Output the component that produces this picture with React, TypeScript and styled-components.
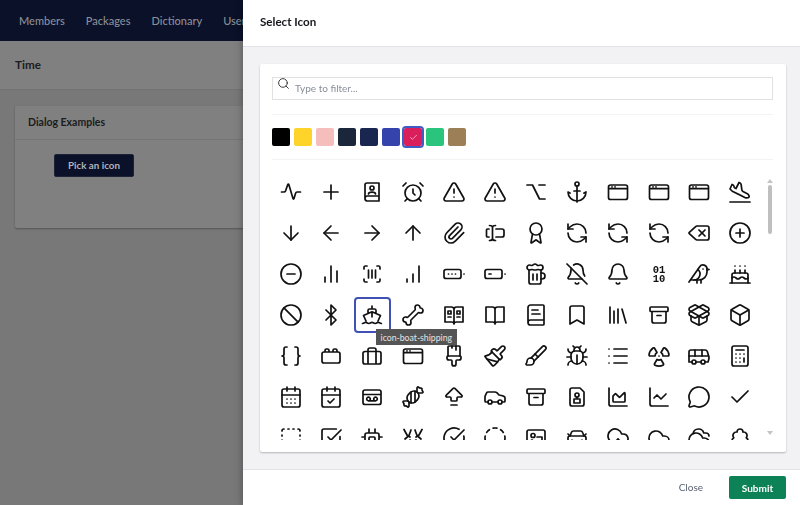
import React from 'react';
import styled, { createGlobalStyle } from 'styled-components';
import {
  AlarmClock, Anchor, ArrowBigUpDash, ArrowDown, ArrowLeft, ArrowRight, ArrowUp, Award, Ban, Beer, Bell, BellOff,
  Bird, Bluetooth, Bone, BookText, Bookmark, Box, Braces, Brush, Bug, Bus, Cake, Calculator, CalendarCheck,
  CalendarDays, Candy, Car, CarFront, ChartArea, ChartLine, Check, CircleCheckBig, CircleDashed, CircleMinus,
  CirclePlus, Cloud, CloudUpload, Cloudy, Delete, Library, List, MessageCircle, PackageOpen, Paintbrush,
  PaintbrushVertical, Paperclip, PlaneLanding, Plus, Radiation, RefreshCcw, Search, SquareCheckBig, SquareDashed,
  TreeDeciduous, TriangleAlert,
} from 'lucide-react';

const navItems = ['Members', 'Packages', 'Dictionary', 'Users'];
const swatches = ['#000000', '#ffd42a', '#f5bdbb', '#1a2639', '#19264f', '#3544ad', '#d91e5b', '#2bc47c', '#9c7f56'];

// path string helpers
const c = (x: number, y: number, r: number) => `M${x - r} ${y}a${r} ${r} 0 1 0 ${2 * r} 0a${r} ${r} 0 1 0 ${-2 * r} 0`;
const rect = (x: number, y: number, w: number, h: number, r: number) =>
  `M${x + r} ${y}h${w - 2 * r}a${r} ${r} 0 0 1 ${r} ${r}v${h - 2 * r}a${r} ${r} 0 0 1 ${-r} ${r}h${-(w - 2 * r)}a${r} ${r} 0 0 1 ${-r} ${-r}v${-(h - 2 * r)}a${r} ${r} 0 0 1 ${r} ${-r}z`;

const BinaryIcon: React.FC = () => (
  <svg width="24" height="24" viewBox="0 0 24 24">
    <BinaryText>
      <tspan x="12" y="11">01</tspan>
      <tspan x="12" y="20">10</tspan>
    </BinaryText>
  </svg>
);

const pulse = 'M2.500 12H5c.8 0 1.300-.5 1.600-1.200L8.800 4.500c.2-.6.8-.6 1 0l4.200 14c.2.7.8.7 1 0l1.600-5.300c.2-.7.7-1.200 1.400-1.200h3.500';
const addressBook = `M5 18.500V5a2 2 0 0 1 2-2h12v18H7a2.500 2.500 0 0 1-2-2.500 2.500 2.500 0 0 1 2-2.500h12${c(12, 8, 2)}M8.500 14c0-2.500 7-2.500 7 0`;
const option = 'M3 5h5.500l7 14H21M15 5h6';
const windowIcon = `${rect(2.5, 5, 19, 14.5, 2)}M2.500 8.700h19M6 6.800h.01M9 6.800h.01`;
const iBeam = 'M6.500 4.500c1.500 0 3 .8 3 2v11c0 1.200-1.500 2-3 2M12.500 4.500c-1.500 0-3 .8-3 2v11c0 1.200 1.500 2 3 2M13 8h6a2 2 0 0 1 2 2v4a2 2 0 0 1-2 2h-6M6 8H4.500a1 1 0 0 0-1 1v6a1 1 0 0 0 1 1H6';
const bars = 'M6 20v-5M12 20V4M18 20V9';
const scan = 'M7 4H5.500A1.500 1.500 0 0 0 4 5.500V7M17 4h1.500A1.500 1.500 0 0 1 20 5.500V7M20 17v1.500a1.500 1.500 0 0 1-1.500 1.500H17M7 20H5.500A1.500 1.500 0 0 1 4 18.500V17M8.500 8v8M12 8v8M15.500 8v8';
const signal = 'M6 20v-3M12 20v-8M18 20V4';
const batteryFull = `${rect(2, 7.5, 17, 9, 2)}M22 12h.01M6.500 12h.01M10 12h.01M13.500 12h.01`;
const batteryLow = `${rect(2, 7.5, 17, 9, 2)}M22 12h.01M6 12h2`;
const ship = 'M12 3v3M8 9.500V7.500A1.500 1.500 0 0 1 9.500 6h5A1.500 1.500 0 0 1 16 7.500v2M6 18l-2.500-5.500L12 8.800l8.500 3.700L18 18M12 8.800v5M2.500 20.500c1.500 0 2.200-1.200 3.200-1.200s1.600 1.200 3.100 1.200 2.200-1.200 3.200-1.200 1.600 1.200 3.100 1.200 2.200-1.200 3.200-1.200 1.600 1.200 3.100 1.200';
const bookLines = 'M12 6.500V21M12 6.500C12 5 11 4 9.500 4H3v15h6.500c1.500 0 2.500.8 2.500 2 0-1.200 1-2 2.500-2H21V4h-6.500C13 4 12 5 12 6.500ZM6 8h3v3H6zM15 8h3v3h-3zM6 14h3M15 14h3';
const bookOpen = 'M12 6.500V21M12 6.500C12 5 11 4 9.500 4H3v15h6.500c1.500 0 2.500.8 2.500 2 0-1.200 1-2 2.500-2H21V4h-6.500C13 4 12 5 12 6.500Z';
const archive = `${rect(3, 4, 18, 4.5, 1)}M5 8.500V18a2 2 0 0 0 2 2h10a2 2 0 0 0 2-2V8.500M10 12.500h4`;
const bricks = `${rect(3, 8, 18, 11, 2)}M6 8V6.500A1.500 1.500 0 0 1 7.500 5h1A1.500 1.500 0 0 1 10 6.500V8M14 8V6.500A1.500 1.500 0 0 1 15.500 5h1A1.500 1.500 0 0 1 18 6.500V8`;
const briefcase = `${rect(3, 7.5, 18, 12.5, 2)}M8 20V7.500M16 20V7.500M8 7.500V6a2 2 0 0 1 2-2h4a2 2 0 0 1 2 2v1.500`;
const cassette = `${rect(3, 5, 18, 14.5, 2)}M3 9.500h18${c(8.5, 14, 1.8)}${c(15.5, 14, 1.8)}M8.500 15.800h7`;
const sim = `M7 3h8l4 4v12a2 2 0 0 1-2 2H7a2 2 0 0 1-2-2V5a2 2 0 0 1 2-2z${c(12, 10, 2)}M9 14h6v4H9zM12 12v2`;
const chip = `${rect(5, 7, 14, 14, 2)}M9 3v4M15 3v4M2 11h3M2 16h3M19 11h3M19 16h3${rect(9, 11, 6, 6, 1)}`;
const cheers = 'M3 3.500l3 5.500 3 2M4 13l4-3.500 2-5.500M21 3.500L18 9l-3 2M20 13l-4-3.500-2-5.500M9 14l2 4M15 14l-2 4';
const imageCard = `${rect(3, 4, 18, 17, 2)}${c(9, 9.5, 2)}M3 17l5-3 4 3M13 11h5v3`;

type IconDef = React.ComponentType<any> | string;

const icons: IconDef[] = [
  pulse, Plus, addressBook, AlarmClock, TriangleAlert, TriangleAlert, option, Anchor, windowIcon, windowIcon, windowIcon, PlaneLanding,
  ArrowDown, ArrowLeft, ArrowRight, ArrowUp, Paperclip, iBeam, Award, RefreshCcw, RefreshCcw, RefreshCcw, Delete, CirclePlus,
  CircleMinus, bars, scan, signal, batteryFull, batteryLow, Beer, BellOff, Bell, BinaryIcon, Bird, Cake,
  Ban, Bluetooth, ship, Bone, bookLines, bookOpen, BookText, Bookmark, Library, archive, PackageOpen, Box,
  Braces, bricks, briefcase, windowIcon, PaintbrushVertical, Paintbrush, Brush, Bug, List, Radiation, Bus, Calculator,
  CalendarDays, CalendarCheck, cassette, Candy, ArrowBigUpDash, Car, archive, sim, ChartArea, ChartLine, MessageCircle, Check,
  SquareDashed, SquareCheckBig, chip, cheers, CircleCheckBig, CircleDashed, imageCard, CarFront, CloudUpload, Cloud, Cloudy, TreeDeciduous,
];

const SELECTED_ICON = 38;
const SELECTED_SWATCH = 6;

const IconGlyph: React.FC<{ def: IconDef }> = ({ def }) => {
  if (typeof def === 'string') {
    return (
      <svg width="24" height="24" viewBox="0 0 24 24" fill="none" stroke="currentColor" strokeWidth="1.7" strokeLinecap="round" strokeLinejoin="round">
        <path d={def} />
      </svg>
    );
  }
  const Comp = def;
  return <Comp size={24} strokeWidth={1.7} />;
};

export default function App() {
  return (
    <>
      <GlobalStyle />
      <Page>
        <Nav>
          {navItems.map((item) => (
            <NavItem key={item}>{item}</NavItem>
          ))}
        </Nav>
        <SubHeader>Time</SubHeader>
        <Content>
          <ExampleCard>
            <ExampleTitle>Dialog Examples</ExampleTitle>
            <ExampleBody>
              <PickButton>Pick an icon</PickButton>
            </ExampleBody>
          </ExampleCard>
        </Content>
      </Page>

      <Drawer>
        <DrawerHeader>Select Icon</DrawerHeader>
        <DrawerBody>
          <Panel>
            <FilterRow>
              <FilterIcon>
                <Search size={13} strokeWidth={1.6} />
              </FilterIcon>
              <FilterInput placeholder="Type to filter..." />
            </FilterRow>
            <SwatchRow>
              {swatches.map((color, i) => (
                <Swatch key={color} $color={color} $selected={i === SELECTED_SWATCH}>
                  {i === SELECTED_SWATCH && <Check size={9} strokeWidth={2} color="#f7d5e0" />}
                </Swatch>
              ))}
            </SwatchRow>
            <IconArea>
              <IconScroll>
                <IconGrid>
                  {icons.map((def, i) => (
                    <IconCell key={i} $selected={i === SELECTED_ICON}>
                      <IconGlyph def={def} />
                      {i === SELECTED_ICON && <Tooltip>icon-boat-shipping</Tooltip>}
                    </IconCell>
                  ))}
                </IconGrid>
              </IconScroll>
              <ScrollTrack>
                <ScrollArrow />
                <ScrollThumb />
                <ScrollArrow $down />
              </ScrollTrack>
            </IconArea>
          </Panel>
        </DrawerBody>
        <DrawerFooter>
          <CloseButton>Close</CloseButton>
          <SubmitButton>Submit</SubmitButton>
        </DrawerFooter>
      </Drawer>
    </>
  );
}

const GlobalStyle = createGlobalStyle`
  html, body {
    margin: 0;
    height: 100%;
    overflow: hidden;
    font-family: 'Lato', 'Liberation Sans', sans-serif;
  }
  * { box-sizing: border-box; }
`;

const BinaryText = styled.text`
  font-family: 'Liberation Mono', monospace;
  font-size: 10.5px;
  font-weight: 700;
  text-anchor: middle;
  fill: #111;
`;

/* page behind the dialog, already dimmed by the backdrop */
const Page = styled.div`
  height: 505px;
  background: #787878;
  display: flex;
  flex-direction: column;
`;

const Nav = styled.nav`
  height: 41px;
  background: #0a1128;
  display: flex;
  align-items: center;
  gap: 21px;
  padding: 0 0 1px 19px;
`;

const NavItem = styled.span`
  font-size: 11px;
  font-weight: 500;
  color: #8a8e98;
`;

const SubHeader = styled.div`
  height: 49px;
  background: #808080;
  border-bottom: 1px solid #737373;
  display: flex;
  align-items: center;
  padding: 0 0 2px 15px;
  font-size: 11.7px;
  font-weight: 700;
  color: #1c1c1c;
`;

const Content = styled.div`
  padding: 16px 15px;
`;

const ExampleCard = styled.div`
  height: 122px;
  background: #808080;
  border-radius: 2px;
  box-shadow: 0 1px 2px rgba(0, 0, 0, 0.3);
`;

const ExampleTitle = styled.div`
  height: 34px;
  padding: 0 0 2px 13px;
  display: flex;
  align-items: center;
  font-size: 10.5px;
  font-weight: 700;
  color: #1c1c1c;
  border-bottom: 1px solid #757575;
`;

const ExampleBody = styled.div`
  padding: 13px 39px;
`;

const PickButton = styled.button`
  width: 80px;
  height: 23px;
  padding: 0;
  border: 1px solid #1c2338;
  border-radius: 2px;
  background: #0a1128;
  color: #b0b3ba;
  font-family: inherit;
  font-size: 9.8px;
  font-weight: 700;
`;

const Drawer = styled.aside`
  position: fixed;
  top: 0;
  right: 0;
  bottom: 0;
  left: 243px;
  display: flex;
  flex-direction: column;
  background: #fff;
  box-shadow: 0 0 8px rgba(0, 0, 0, 0.35);
`;

const DrawerHeader = styled.header`
  height: 47px;
  flex: none;
  display: flex;
  align-items: center;
  padding: 0 0 3px 17px;
  font-size: 11.6px;
  font-weight: 700;
  color: #15171c;
  border-bottom: 1px solid #e2e3e6;
`;

const DrawerBody = styled.div`
  flex: 1;
  min-height: 0;
  background: #f2f2f4;
  padding: 17px 14px 17px 17px;
`;

const Panel = styled.section`
  height: 100%;
  background: #fff;
  border-radius: 2px;
  box-shadow: 0 1px 2px rgba(0, 0, 0, 0.25);
  padding: 13px 13px 0 12px;
`;

const FilterRow = styled.div`
  position: relative;
  padding-bottom: 14px;
  border-bottom: 1px solid #f3f3f4;
`;

const FilterIcon = styled.span`
  position: absolute;
  top: 0;
  left: 5px;
  color: #222;
  line-height: 0;
`;

const FilterInput = styled.input`
  display: block;
  width: 100%;
  height: 23px;
  padding: 0 0 1px 22px;
  border: 1px solid #e0e1e3;
  outline: none;
  font-family: inherit;
  font-size: 10px;
  color: #333;

  &::placeholder {
    color: #888e99;
    opacity: 1;
  }
`;

const SwatchRow = styled.div`
  display: flex;
  gap: 4px;
  padding: 13px 0;
  border-bottom: 1px solid #f3f3f4;
`;

const Swatch = styled.span<{ $color: string; $selected: boolean }>`
  width: 18px;
  height: 18px;
  display: flex;
  align-items: center;
  justify-content: center;
  border-radius: 2px;
  background: ${(p) => p.$color};
  outline: ${(p) => (p.$selected ? '2px solid #3f5cc4' : 'none')};
`;

const IconArea = styled.div`
  display: flex;
  height: 266px;
  margin-top: 14px;
`;

const IconScroll = styled.div`
  flex: 1;
  min-width: 0;
  overflow: hidden;
`;

const IconGrid = styled.div`
  display: grid;
  grid-template-columns: repeat(12, 40.9px);
  grid-auto-rows: 36px;
  row-gap: 5px;
  position: relative;
`;

const IconCell = styled.div<{ $selected: boolean }>`
  position: relative;
  width: 37px;
  height: 36px;
  display: flex;
  align-items: center;
  justify-content: center;
  color: #111;
  border-radius: 4px;
  border: ${(p) => (p.$selected ? '2px solid #3f51b5' : '2px solid transparent')};
`;

const Tooltip = styled.span`
  position: absolute;
  top: 30px;
  left: 20px;
  z-index: 2;
  width: 81px;
  height: 16px;
  display: flex;
  align-items: center;
  justify-content: center;
  background: #555;
  color: #e4e4e4;
  font-size: 8.7px;
  white-space: nowrap;
`;

const ScrollTrack = styled.div`
  flex: none;
  width: 10px;
  display: flex;
  flex-direction: column;
  align-items: center;
  padding: 5px 0 0 4px;
  height: 264px;
`;

const ScrollArrow = styled.span<{ $down?: boolean }>`
  width: 0;
  height: 0;
  border-left: 3px solid transparent;
  border-right: 3px solid transparent;
  border-bottom: ${(p) => (p.$down ? '0' : '4px solid #c4c4c4')};
  border-top: ${(p) => (p.$down ? '4px solid #c4c4c4' : '0')};
  margin-top: ${(p) => (p.$down ? 'auto' : '0')};
  margin-bottom: ${(p) => (p.$down ? '3px' : '0')};
`;

const ScrollThumb = styled.span`
  width: 4px;
  height: 49px;
  margin-top: 2px;
  border-radius: 2px;
  background: #bfbfbf;
`;

const DrawerFooter = styled.footer`
  height: 36px;
  flex: none;
  display: flex;
  align-items: center;
  justify-content: flex-end;
  gap: 26px;
  padding-right: 14px;
  border-top: 1px solid #e2e3e6;
`;

const CloseButton = styled.button`
  padding: 0 0 1px;
  border: 0;
  background: none;
  font-family: inherit;
  font-size: 10px;
  color: #5a6072;
`;

const SubmitButton = styled.button`
  width: 57px;
  height: 23px;
  padding: 0;
  border: 0;
  border-radius: 2px;
  background: #0d8257;
  color: #fff;
  font-family: inherit;
  font-size: 10px;
  font-weight: 700;
`;
